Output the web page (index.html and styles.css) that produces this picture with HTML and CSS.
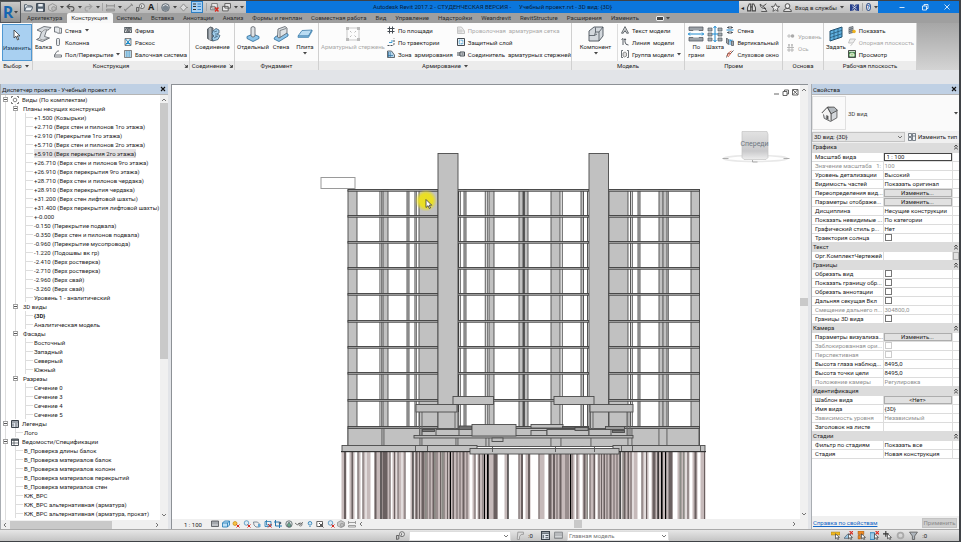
FILE: index.html
```html
<!DOCTYPE html>
<html lang="ru">
<head>
<meta charset="utf-8">
<title>Autodesk Revit 2017.2</title>
<link rel="stylesheet" href="styles.css">
</head>
<body>
<svg class="sprite" aria-hidden="true">
  <symbol id="caret" viewBox="0 0 4 4"><path d="M0 1h4L2 3.500z" fill="#444"/></symbol>
  <symbol id="chev" viewBox="0 0 6 6"><path d="M1 2l2 2 2-2" fill="none" stroke="#555" stroke-width=".8"/></symbol>
  <symbol id="dbl" viewBox="0 0 6 6"><path d="M1.300 2.800L3 1.200l1.700 1.600M1.300 5.200L3 3.600l1.700 1.600" fill="none" stroke="#222" stroke-width=".9"/></symbol>
  <symbol id="corner" viewBox="0 0 4 4"><path d="M.5.5l2 2M3.500 1v2.500H1z" fill="#333" stroke="#333" stroke-width=".6"/></symbol>
  <symbol id="close" viewBox="0 0 6 6"><path d="M1 1l4 4M5 1L1 5" fill="none" stroke="#111" stroke-width="1.100"/></symbol>
  <symbol id="open" viewBox="0 0 8 8"><path d="M.5 7V1.500h2l1 1h3v1M.5 7l1.500-3.500h6L6.200 7z" fill="#e8edf2" stroke="#4b5866" stroke-width=".8"/></symbol>
  <symbol id="save" viewBox="0 0 8 8"><path d="M.5.5h7v7h-7z" fill="#53616f" stroke="#34404c" stroke-width=".8"/><path d="M2 .8h4v2.400H2zM1.800 5h4.400v2.400H1.800z" fill="#e8edf2"/></symbol>
  <symbol id="box" viewBox="0 0 8 8"><path d="M.5 2.500L4 .6l3.500 1.900v3.400L4 7.600.5 5.900z" fill="#ccc" stroke="#888" stroke-width=".7"/><circle cx="5" cy="5" r="1.800" fill="#bbb" stroke="#888" stroke-width=".6"/></symbol>
  <symbol id="undo" viewBox="0 0 8 8"><path d="M3.500 1L1 3.200l2.500 2.200M1 3.200h4q2.300.2 2 2.300T4.500 7" fill="none" stroke="#555" stroke-width="1"/></symbol>
  <symbol id="redo" viewBox="0 0 8 8"><path d="M4.500 1L7 3.200 4.500 5.400M7 3.200H3Q.7 3.400 1 5.500T3.500 7" fill="none" stroke="#a3a3a3" stroke-width="1"/></symbol>
  <symbol id="measure" viewBox="0 0 8 8"><path d="M.5 1v3M7.500 1v3M.5 2.500h7M.5 5.500h7v1.500h-7z" fill="none" stroke="#888" stroke-width=".8"/></symbol>
  <symbol id="dim" viewBox="0 0 8 8"><path d="M1 6.500L7 1.500M0 5.500l2 2M6 .5l2 2" fill="none" stroke="#888" stroke-width=".9"/></symbol>
  <symbol id="tag" viewBox="0 0 8 8"><circle cx="5.300" cy="2.800" r="2.200" fill="#eee" stroke="#555" stroke-width=".7"/><path d="M.5 7.500V4h2v3zM5 2v2" fill="none" stroke="#555" stroke-width=".8"/></symbol>
  <symbol id="globe" viewBox="0 0 8 8"><circle cx="4" cy="4" r="3.400" fill="#dde1e5" stroke="#555f69" stroke-width=".8"/><path d="M1 3.500l3-1.700 3 1.700v2L4 7 1 5.500z" fill="#7a858f"/></symbol>
  <symbol id="diamond" viewBox="0 0 8 8"><path d="M4 .8L6.800 4 4 7.200 1.200 4zM6.500 4H8" fill="#ddd" stroke="#888" stroke-width=".8"/></symbol>
  <symbol id="thin" viewBox="0 0 8 8"><path d="M0 1h3M0 3.500h3M0 6.500h3" stroke="#333" stroke-width="1.200"/><path d="M4.500 1H8M4.500 3.500H8M4.500 6.500H8" stroke="#0962b5" stroke-width=".7"/></symbol>
  <symbol id="wins" viewBox="0 0 8 8"><path d="M2.500.5h5v4h-5zM.5 3h5v4h-5z" fill="#eee" stroke="#555" stroke-width=".8"/></symbol>
  <symbol id="winx" viewBox="0 0 8 8"><path d="M1.500.5h5v4h-5zM.5 3h4v3h-4z" fill="#eee" stroke="#666" stroke-width=".7"/><path d="M4.500 4l3 3.500M7.500 4l-3 3.500" stroke="#d92a20" stroke-width="1.200"/></symbol>
  <symbol id="arrow" viewBox="0 0 8 12"><path d="M1 1v8l2-1.800L4.500 11l1.300-.6-1.500-3.500H7z" fill="#fff" stroke="#333" stroke-width=".8"/></symbol>
  <symbol id="beam" viewBox="0 0 16 16"><path d="M1 4l7-3.500 7 1-2 2-2.500 1-2 6 5 1.500-7 3.500-6-2 3-1.500 2-6z" fill="#d6dade" stroke="#555c63" stroke-width=".8"/><path d="M6 6l2-2 3-.5M4 13l3 1 5-2" fill="none" stroke="#777" stroke-width=".6"/></symbol>
  <symbol id="wall" viewBox="0 0 8 8"><path d="M.5 1h4l1 1.200h2v5h-4L2.500 6h-2z" fill="#e7eaed" stroke="#555c63" stroke-width=".8"/><path d="M5.500 2.200v5" stroke="#888" stroke-width=".6"/></symbol>
  <symbol id="col" viewBox="0 0 8 8"><rect x="2.500" y=".5" width="3" height="7" rx="1" fill="#e7eaed" stroke="#555c63" stroke-width=".8"/></symbol>
  <symbol id="floor" viewBox="0 0 8 8"><path d="M.5 5l2-3q.5-1 1.500-1h1M.5 5h7v2h-7z" fill="#f5f5f5" stroke="#555c63" stroke-width=".8"/></symbol>
  <symbol id="truss" viewBox="0 0 8 8"><path d="M.3 1.500h7.400v5H.3zM.3 6.500l2-5 1.800 5 1.800-5 1.800 5M2.300 6.500l1.800-5 1.800 5" fill="none" stroke="#444b52" stroke-width=".8"/></symbol>
  <symbol id="brace" viewBox="0 0 8 8"><path d="M1 .5h6v7H1z" fill="#e7eaed" stroke="#555" stroke-width=".7"/><path d="M1.500 7L4 4 1.500 1M6.500 7L4 4l2.500-3M2 5.500h4" fill="none" stroke="#0b84c6" stroke-width=".9"/></symbol>
  <symbol id="bsys" viewBox="0 0 8 8"><path d="M.5.5h7v7h-7z" fill="#e7eaed" stroke="#555" stroke-width=".7"/><path d="M2.200 1v6M4 1v6M5.800 1v6" stroke="#2a93cf" stroke-width=".8"/></symbol>
  <symbol id="join" viewBox="0 0 16 16"><path d="M2.500 3l3-2L8 2v13l-3-1-2.500-1.500z" fill="#7e878f" stroke="#454c53" stroke-width=".8"/><path d="M5 2v12" stroke="#dfe3e6" stroke-width="1"/><path d="M8 5l3-2.500 3 1.500v3l-2 1 3 1.500-2 4-5 1.500-1-3 2-2-2-2z" fill="#9fcbe8" stroke="#3b5c75" stroke-width=".8"/><path d="M9 6l3-1M9 12l4-2M11 7v4" stroke="#3b5c75" stroke-width=".7"/></symbol>
  <symbol id="foot" viewBox="0 0 16 16"><path d="M2 10.500L8 8l6 2.500v2L8 15.500l-6-3z" fill="#8cc3e8" stroke="#2a6b9b" stroke-width=".8"/><path d="M6 1.500l2-1 2 1V10l-2 1.200L6 10z" fill="#dfe3e6" stroke="#555c63" stroke-width=".8"/></symbol>
  <symbol id="wfoot" viewBox="0 0 16 16"><path d="M2 11l9-5 4 2v2l-9 5.500L1 13z" fill="#8cc3e8" stroke="#2a6b9b" stroke-width=".8"/><path d="M5 3l7-2.500 2 1.500v5l-8 5-1.500-1z" fill="#dfe3e6" stroke="#555c63" stroke-width=".8"/><path d="M7 4.500l6-2M7 4.500v7" stroke="#555c63" stroke-width=".7"/></symbol>
  <symbol id="slab" viewBox="0 0 16 16"><path d="M1 10l4-5.500 10-.5-3.500 6z" fill="#b9dcf3" stroke="#3b7ba8" stroke-width=".8"/><path d="M1 10v1.500h10.500L15 5.500V4l-3.500 6z" fill="#7fb8dd" stroke="#3b7ba8" stroke-width=".6"/></symbol>
  <symbol id="rebar" viewBox="0 0 16 16"><path d="M2 2h12v12H2z" fill="none" stroke="#c9c9c9"/><path d="M1 1h3v3H1zM12 1h3v3h-3zM1 12h3v3H1zM12 12h3v3h-3z" fill="#bbb"/><path d="M5 5l1.500 1.500M11 11l-1.500-1.500M11 5L9.500 6.500M5 11l1.500-1.500" stroke="#bbb"/></symbol>
  <symbol id="area" viewBox="0 0 8 8"><path d="M2.500.5v7M5.500.5v7M.5 2.500h7M.5 5.500h7" stroke="#454c53" stroke-width="1"/></symbol>
  <symbol id="path" viewBox="0 0 8 8"><path d="M.5 7.500h5q1.500 0 1.500-2V.5" fill="none" stroke="#454c53" stroke-width="1" stroke-dasharray="2 1"/><path d="M2 4.500h3V2" fill="none" stroke="#2a93cf" stroke-width=".9"/></symbol>
  <symbol id="zone" viewBox="0 0 8 8"><path d="M.5 1l4 0 3 4v2.500h-7z" fill="#b9d8ec" stroke="#454c53" stroke-width=".8"/><path d="M1.500 2v5M3.200 2v5M1 5.500h5" stroke="#2a6b9b" stroke-width=".7"/></symbol>
  <symbol id="mesh" viewBox="0 0 8 8"><path d="M.5 1h4l3 4v2.500h-7z" fill="#eee" stroke="#b9b9b9" stroke-width=".8"/><path d="M2 2v5M4 3v4M1 5h6" stroke="#bbb" stroke-width=".6"/></symbol>
  <symbol id="cover" viewBox="0 0 8 8"><path d="M.5.5h7v7h-7z" fill="#f4f6f8" stroke="#454c53" stroke-width="1"/><path d="M2.200 2.200h3.600v3.600H2.200z" fill="none" stroke="#0b84c6" stroke-width=".8" stroke-dasharray="1 .6"/></symbol>
  <symbol id="coupler" viewBox="0 0 8 8"><path d="M3 2h4.500v4H3zM0 3h3M0 5h3M4.500 4h2" fill="#d8dce0" stroke="#454c53" stroke-width="1"/></symbol>
  <symbol id="cube" viewBox="0 0 16 16"><path d="M1 5l5-4h9v9l-4 5H1z" fill="#d3d8dd" stroke="#4b535b" stroke-width=".9"/><path d="M1 9.500h5.500l1-3.500H11l4-5M7.500 6V1.500M11 6v9M6.500 9.500L9 8" fill="none" stroke="#4b535b" stroke-width=".8"/></symbol>
  <symbol id="mtext" viewBox="0 0 8 8"><path d="M.5 7.200L4 .6l3.500 6.600H5.600L5 5.500H3l-.7 1.700zM3.500 4.200h1.200" fill="#e5e5e5" stroke="#454c53" stroke-width=".8"/></symbol>
  <symbol id="mline" viewBox="0 0 8 8"><path d="M.5 1.500l1.500-1V7M4 1v3q.3 3 3.500 3M3 2l1-1.300L5 2" fill="none" stroke="#454c53" stroke-width=".9"/></symbol>
  <symbol id="group" viewBox="0 0 8 8"><path d="M2 .5H.5v7H2M6 .5h1.500v7H6" fill="none" stroke="#454c53" stroke-width=".8"/><path d="M2 3l2-1 1.500 1v3L3.500 7 2 6z" fill="#ddd" stroke="#555" stroke-width=".6"/></symbol>
  <symbol id="face" viewBox="0 0 16 16"><path d="M1 1h14v3.500h-4.500v7H15V15H1v-3.500h4.500v-7H1z" fill="#9ba1a7" stroke="#555c63" stroke-width=".8"/><path d="M5 4.500h6v7H5z" fill="#fff"/><path d="M0 8h16M2 6.500L.5 8 2 9.500M14 6.500L15.500 8 14 9.500" fill="none" stroke="#1d8bd1" stroke-width="1"/></symbol>
  <symbol id="shaft" viewBox="0 0 16 16"><path d="M1 2h4v3H1zM1 7h4v3H1zM1 12h4v3H1zM11 2h4v3h-4zM11 7h4v3h-4zM11 12h4v3h-4z" fill="#a5abb0" stroke="#555c63" stroke-width=".7"/><path d="M8 0v16M6.500 2L8 .3 9.500 2M6.500 14L8 15.700 9.500 14M5 8h6" fill="none" stroke="#1d8bd1" stroke-width="1"/></symbol>
  <symbol id="wopen" viewBox="0 0 8 8"><path d="M1 1.500h2M5 1.500h2M1 6.500h2M5 6.500h2M3 0v3M5 0v3M3 5v3M5 5v3" stroke="#454c53" stroke-width=".9"/><path d="M.5 4h7" stroke="#1d8bd1"/></symbol>
  <symbol id="vopen" viewBox="0 0 8 8"><path d="M.5 0v5l2 1.500V1.500zM5.500 3v4.500h2V3z" fill="#a5abb0" stroke="#454c53" stroke-width=".7"/><path d="M4 1v6M3.500 3l3-1" stroke="#1d8bd1" stroke-width=".9"/></symbol>
  <symbol id="dormer" viewBox="0 0 8 8"><path d="M.5 7.500L2 3l2 1 3.500-3.500" fill="none" stroke="#555" stroke-width=".9"/><path d="M1 6l2.500-4 2-1M2 7l3-4" fill="none" stroke="#d2472f" stroke-width=".8"/></symbol>
  <symbol id="level" viewBox="0 0 8 8"><path d="M0 4h4M2 2v4" stroke="#aaa" stroke-width=".7"/><circle cx="5.500" cy="4" r="1.800" fill="#aaa"/></symbol>
  <symbol id="grid" viewBox="0 0 8 8"><path d="M2 2v6M5 2v6M0 3.500h7M0 6h7" stroke="#aaa" stroke-width=".8"/><circle cx="2" cy="1" r=".9" fill="#aaa"/><circle cx="5" cy="1" r=".9" fill="#aaa"/></symbol>
  <symbol id="plane" viewBox="0 0 16 16"><path d="M2 5l12-4v10L2 15z" fill="#5fb0e0" stroke="#21506f" stroke-width="1"/><path d="M6 3.700v10M10 2.300v10M2 8.300l12-4M2 11.700l12-4" stroke="#21506f" stroke-width=".7"/></symbol>
  <symbol id="show" viewBox="0 0 8 8"><path d="M1 1.500l4-1v6l-4 1zM1 3.500l4-1M1 5.500l4-1M3 1v6" fill="#cfd6dc" stroke="#454c53" stroke-width=".7"/><circle cx="6" cy="5.500" r="1.800" fill="#f0b31e"/></symbol>
  <symbol id="rplane" viewBox="0 0 8 8"><path d="M2 1h5.500L5 5H.5zM2.500 7.500l2-1.500" fill="#eee" stroke="#b5b5b5" stroke-width=".8"/></symbol>
  <symbol id="keyi" viewBox="0 0 8 8"><path d="M2.500 1h5v2h-2L4 5v2.500H2z" fill="#ddd" stroke="#999" stroke-width=".8"/></symbol>
  <symbol id="view" viewBox="0 0 8 8"><path d="M.5.5h7v7h-7z" fill="#4d8b52" stroke="#333" stroke-width=".8"/><path d="M1 1.500h6M2 4l2-1 2 1v2H2z" stroke="#fff" stroke-width=".7" fill="#a9cf8d"/></symbol>
  <symbol id="binoc" viewBox="0 0 8 8"><path d="M.5 7V4L2 .8h1.300V7zM7.500 7V4L6 .8H4.700V7z" fill="#ddd" stroke="#444" stroke-width=".9"/><path d="M3 3.500h2" stroke="#444"/></symbol>
  <symbol id="sat" viewBox="0 0 8 8"><path d="M1 1q0 4 5 4L3.500 3zM3.500 3L6.500.7M2 7.500h5L5 4.500" fill="#ddd" stroke="#444" stroke-width=".8"/></symbol>
  <symbol id="star" viewBox="0 0 8 8"><path d="M4 .5l1 2.400 2.600.2-2 1.700.7 2.600L4 6 1.700 7.400l.7-2.600-2-1.700L3 2.900z" fill="#eee" stroke="#444" stroke-width=".7"/></symbol>
  <symbol id="user" viewBox="0 0 8 8"><circle cx="4" cy="2.700" r="2.100" fill="#eee" stroke="#444" stroke-width=".8"/><path d="M.5 7.500q0-2 2.300-2.500h2.400q2.300.5 2.300 2.500z" fill="#eee" stroke="#444" stroke-width=".8"/></symbol>
  <symbol id="exch" viewBox="0 0 8 8"><path d="M0 1l3 .3L4 3l1-1.700L8 1v6l-3-.3L4 5 3 6.700 0 7z" fill="#27408b"/><path d="M2 2.500l4 3M6 2.500l-4 3" stroke="#e6ebf5" stroke-width=".7"/></symbol>
  <symbol id="house" viewBox="0 0 16 16"><path d="M2 7l5-5 8 3v7l-6 3.500-6-3z" fill="#d5d9dd" stroke="#555" stroke-width=".8"/><path d="M.8 7.500L6 2l3.500 6.300V15" fill="#f3f3f3" stroke="#444" stroke-width=".9"/><path d="M9.500 8.300L15.500 5l-3-3L6 2z" fill="#b4babf" stroke="#444" stroke-width=".8"/><path d="M5 13V9.500l2 .8v3.500z" fill="#555"/></symbol>
  <symbol id="types" viewBox="0 0 8 8"><path d="M.5.5h3v3h-3zM.5 4.500h3v3h-3zM4.500.5h3v7h-3zM4.500 3h3" fill="#eef2f6" stroke="#48525c" stroke-width=".7"/></symbol>
  <symbol id="brk" viewBox="0 0 8 8"><path d="M2 .5H.5V2M6 .5h1.500V2M2 7.500H.5V6M6 7.500h1.500V6" fill="none" stroke="#555" stroke-width=".8"/><circle cx="4" cy="4" r="1.800" fill="none" stroke="#555" stroke-width=".7"/></symbol>
  <symbol id="legend" viewBox="0 0 8 8"><path d="M.5.5h7v7h-7z" fill="#dfe5ec" stroke="#3b434b"/><path d="M1 2h6M2 3.500v3M4 4h2.500M4 6h2.500" stroke="#3b434b" stroke-width=".8"/></symbol>
  <symbol id="sched" viewBox="0 0 8 8"><path d="M.5 1h7v6.500h-7z" fill="#fff" stroke="#3b434b" stroke-width=".9"/><path d="M.5 2h7" stroke="#3b434b" stroke-width="1.500"/><path d="M.5 5h7M3 2v5.500" stroke="#3b434b" stroke-width=".7"/></symbol>
  <symbol id="v1" viewBox="0 0 8 8"><path d="M.5 1h7v5.500h-7z" fill="#a5a9ae" stroke="#4b4f54" stroke-width=".8"/><path d="M1 5h6" stroke="#d8dbde"/></symbol>
  <symbol id="v2" viewBox="0 0 8 8"><path d="M.5 3l2-2h5v4l-2 2h-5zM.5 3h5v4M5.500 3l2-2" fill="#bfe0f5" stroke="#1d77b3" stroke-width=".8"/></symbol>
  <symbol id="v3" viewBox="0 0 8 8"><circle cx="3" cy="3.500" r="2" fill="#f6c243" stroke="#c78a12" stroke-width=".7"/><path d="M4.500 4.500L7.500 7.500M7.500 4.500l-3 3" stroke="#d92a20"/></symbol>
  <symbol id="v4" viewBox="0 0 8 8"><circle cx="3.500" cy="3" r="2.300" fill="#d8ecf8" stroke="#3c83b3" stroke-width=".7"/><path d="M4.500 4.500L7.500 7.500M7.500 4.500l-3 3" stroke="#d92a20"/></symbol>
  <symbol id="v5" viewBox="0 0 8 8"><path d="M.5 2h4l2 2v3H3L1 5z" fill="#eee" stroke="#567" stroke-width=".7"/><path d="M5 4h2.500v3H5z" fill="#62a8d5"/></symbol>
  <symbol id="v6" viewBox="0 0 8 8"><path d="M1 1.500h6v5H1zM2.500 0v5H8" fill="#d8ecf8" stroke="#2577ad" stroke-width=".8"/><path d="M4 4l3.500 3.500M7.500 4L4 7.500" stroke="#d92a20"/></symbol>
  <symbol id="v7" viewBox="0 0 8 8"><path d="M1.500 0v6H8M0 2h5.500v6" fill="none" stroke="#2577ad"/><circle cx="6" cy="3" r="1.300" fill="#567"/></symbol>
  <symbol id="v8" viewBox="0 0 8 8"><circle cx="4" cy="4" r="3.200" fill="#dfe3e6" stroke="#566" stroke-width=".8"/><path d="M2 5l2-3 2 3v2H3z" fill="#69a58a" stroke="#445" stroke-width=".5"/></symbol>
  <symbol id="v9" viewBox="0 0 8 8"><path d="M0 3l2.500 2L4 3l2 1.500L8 2" fill="none" stroke="#555" stroke-width=".8"/><circle cx="5.500" cy="4.500" r="1.500" fill="none" stroke="#555" stroke-width=".7"/></symbol>
  <symbol id="v10" viewBox="0 0 8 8"><circle cx="4" cy="3.300" r="1.800" fill="#cfe8f9" stroke="#2577ad" stroke-width=".8"/><path d="M3.500 6h1v1h-1z" fill="#2577ad"/></symbol>
  <symbol id="v11" viewBox="0 0 8 8"><path d="M.8 1.500h5.700v5H.8z" fill="#fff" stroke="#444" stroke-width=".8"/><path d="M3 3l4.500 4.500M7 3L3 7" stroke="#444" stroke-width=".9"/></symbol>
  <symbol id="pick" viewBox="0 0 8 8"><path d="M4 2.500v4.500l1.200-1L6 7.700l.8-.4L6 5.700h1.500z" fill="#fff" stroke="#333" stroke-width=".6"/></symbol>
</svg>

<div class="app">
  <header class="top">
    <button class="appbtn" aria-label="Меню приложения"><span>R</span><svg class="car"><use href="#caret"/></svg></button>
    <div class="bars">
      <div class="title">
        <div class="qat">
          <svg class="i8"><use href="#open"/></svg><svg class="i8"><use href="#save"/></svg><svg class="i8"><use href="#box"/></svg><svg class="car"><use href="#caret"/></svg>
          <svg class="i8"><use href="#undo"/></svg><svg class="car"><use href="#caret"/></svg>
          <svg class="i8"><use href="#redo"/></svg><svg class="car"><use href="#caret"/></svg><i class="sep"></i>
          <svg class="i8"><use href="#measure"/></svg><svg class="car"><use href="#caret"/></svg>
          <svg class="i8"><use href="#dim"/></svg><svg class="i8"><use href="#tag"/></svg><b class="bigA">A</b><i class="sep"></i>
          <svg class="i8"><use href="#globe"/></svg><svg class="car"><use href="#caret"/></svg>
          <svg class="i8"><use href="#diamond"/></svg><span class="on"><svg class="i8"><use href="#thin"/></svg></span>
          <i class="sep"></i><svg class="i8"><use href="#winx"/></svg><svg class="i8"><use href="#wins"/></svg><svg class="car"><use href="#caret"/></svg><svg class="car"><use href="#caret"/></svg>
        </div>
        <h1><span>Autodesk Revit 2017.2 - СТУДЕНЧЕСКАЯ ВЕРСИЯ -</span><span>Учебный проект.rvt - 3D вид: {3D}</span></h1>
        <div class="info">
          <span class="tri">◂</span><svg class="i8"><use href="#binoc"/></svg><svg class="i8"><use href="#sat"/></svg><svg class="i8"><use href="#star"/></svg><svg class="i8"><use href="#user"/></svg>
          <span>Вход в службы</span><svg class="car"><use href="#caret"/></svg><svg class="i8 ex"><use href="#exch"/></svg><i class="sep"></i><b class="help">?</b><svg class="car"><use href="#caret"/></svg>
        </div>
        <div class="wctl">
          <svg viewBox="0 0 8 8"><path d="M1.500 4.500h5"/></svg>
          <svg viewBox="0 0 8 8"><path d="M1.500 3h4v4h-4zM3 3V1.500h4v4H5.500"/></svg>
          <svg viewBox="0 0 8 8"><path d="M1.500 1.500l5 5M6.500 1.500l-5 5"/></svg>
        </div>
      </div>
      <nav class="tabs">
        <a href="#">Архитектура</a><a href="#" class="cur">Конструкция</a><a href="#">Системы</a><a href="#">Вставка</a><a href="#">Аннотации</a><a href="#">Анализ</a><a href="#">Формы и генплан</a><a href="#">Совместная работа</a><a href="#">Вид</a><a href="#">Управление</a><a href="#">Надстройки</a><a href="#">Weandrevit</a><a href="#">RevitStructure</a><a href="#">Расширения</a><a href="#">Изменить</a><span class="pill"></span><svg class="car"><use href="#caret"/></svg>
      </nav>
    </div>
  </header>

  <div class="ribbon">
    <section class="panel"><div class="tools"><button class="big picked"><svg><use href="#arrow"/></svg>Изменить</button></div><h2>Выбор <svg class="car"><use href="#caret"/></svg></h2></section>
    <section class="panel"><div class="tools">
      <button class="big beam"><svg><use href="#beam"/></svg>Балка</button>
      <div class="stack framing"><button><svg><use href="#wall"/></svg>Стена<svg class="car"><use href="#caret"/></svg></button><button><svg><use href="#col"/></svg>Колонна</button><button><svg><use href="#floor"/></svg>Пол/Перекрытие<svg class="car"><use href="#caret"/></svg></button></div>
      <div class="stack"><button><svg><use href="#truss"/></svg>Ферма</button><button><svg><use href="#brace"/></svg>Раскос</button><button><svg><use href="#bsys"/></svg>Балочная система</button></div>
    </div><h2>Конструкция<svg class="corner"><use href="#corner"/></svg></h2></section>
    <section class="panel"><div class="tools mid"><button class="big"><svg><use href="#join"/></svg>Соединение</button></div><h2 class="snug">Соединение<svg class="corner"><use href="#corner"/></svg></h2></section>
    <section class="panel"><div class="tools mid"><button class="big"><svg><use href="#foot"/></svg>Отдельный</button><button class="big narrow"><svg><use href="#wfoot"/></svg>Стена</button><button class="big narrow"><svg><use href="#slab"/></svg>Плита<svg class="car"><use href="#caret"/></svg></button></div><h2>Фундамент</h2></section>
    <section class="panel"><div class="tools">
      <button class="big wide off"><svg><use href="#rebar"/></svg>Арматурный стержень</button>
      <div class="stack zones"><button><svg><use href="#area"/></svg>По площади</button><button><svg><use href="#path"/></svg>По траектории</button><button><svg><use href="#zone"/></svg>Зона&nbsp; армирования</button></div>
      <div class="stack"><button class="off"><svg><use href="#mesh"/></svg>Проволочная&nbsp; арматурная сетка</button><button><svg><use href="#cover"/></svg>Защитный слой</button><button><svg><use href="#coupler"/></svg>Соединитель&nbsp; арматурных стержней</button></div>
    </div><h2>Армирование <svg class="car"><use href="#caret"/></svg></h2></section>
    <section class="panel"><div class="tools">
      <button class="big comp"><svg><use href="#cube"/></svg>Компонент<svg class="car"><use href="#caret"/></svg></button>
      <div class="stack ruled"><button><svg><use href="#mtext"/></svg>Текст модели</button><button><svg><use href="#mline"/></svg>Линия&nbsp; модели</button><button><svg><use href="#group"/></svg>Группа модели<svg class="car"><use href="#caret"/></svg></button></div>
    </div><h2>Модель</h2></section>
    <section class="panel"><div class="tools">
      <button class="big slim"><svg><use href="#face"/></svg>По<br>грани</button><button class="big slim"><svg><use href="#shaft"/></svg>Шахта</button>
      <div class="stack"><button><svg><use href="#wopen"/></svg>Стена</button><button><svg><use href="#vopen"/></svg>Вертикальный</button><button><svg><use href="#dormer"/></svg>Слуховое окно</button></div>
    </div><h2>Проем</h2></section>
    <section class="panel"><div class="tools"><div class="stack two"><button class="off"><svg><use href="#level"/></svg>Уровень</button><button class="off"><svg><use href="#grid"/></svg>Ось</button></div></div><h2>Основа</h2></section>
    <section class="panel"><div class="tools"><button class="big slim"><svg><use href="#plane"/></svg>Задать</button>
      <div class="stack"><button><svg><use href="#show"/></svg>Показать</button><button class="off"><svg><use href="#rplane"/></svg>Опорная плоскость</button><button><svg><use href="#view"/></svg>Просмотр</button></div>
    </div><h2>Рабочая плоскость</h2></section>
    <div class="rest"></div>
  </div>

  <main class="work">
    <aside class="dock browser">
      <h3>Диспетчер проекта - Учебный проект.rvt<svg class="x"><use href="#close"/></svg></h3>
      <div class="scroller">
        <ul class="tree">
          <li><div class="row"><i class="tg"></i><svg><use href="#brk"/></svg>Виды (По комплектам)</div>
            <ul>
              <li><div class="row"><i class="tg"></i>Планы несущих конструкций</div>
                <ul class="leaf"><li>+1.500 (Козырьки)</li><li>+2.710 (Верх стен и пилонов 1го этажа)</li><li>+2.910 (Перекрытие 1го этажа)</li><li>+5.710 (Верх стен и пилонов 2го этажа)</li><li><span class="sel">+5.910 (Верх перекрытия 2го этажа)</span></li><li>+26.710 (Верх стен и пилонов 9го этажа)</li><li>+26.910 (Верх перекрытия 9го этажа)</li><li>+28.710 (Верх стен и пилонов чердака)</li><li>+28.910 (Верх перекрытия чердака)</li><li>+31.200 (Верх стен лифтовой шахты)</li><li>+31.400 (Верх перекрытия лифтовой шахты)</li><li>+-0.000</li><li>-0.150 (Перекрытие подвала)</li><li>-0.350 (Верх стен и пилонов подвала)</li><li>-0.960 (Перекрытие мусопровода)</li><li>-1.220 (Подошвы вк гр)</li><li>-2.410 (Верх ростверка)</li><li>-2.710 (Верх ростверка)</li><li>-2.960 (Верх свай)</li><li>-3.260 (Верх свай)</li><li>Уровень 1 - аналитический</li></ul></li>
              <li><div class="row"><i class="tg"></i>3D виды</div><ul class="leaf"><li><b>{3D}</b></li><li>Аналитическая модель</li></ul></li>
              <li><div class="row"><i class="tg"></i>Фасады</div><ul class="leaf"><li>Восточный</li><li>Западный</li><li>Северный</li><li>Южный</li></ul></li>
              <li><div class="row"><i class="tg"></i>Разрезы</div><ul class="leaf"><li>Сечение 0</li><li>Сечение 3</li><li>Сечение 4</li><li>Сечение 5</li></ul></li>
            </ul></li>
          <li><div class="row"><i class="tg"></i><svg><use href="#legend"/></svg>Легенды</div><ul class="leaf"><li>Лого</li></ul></li>
          <li><div class="row"><i class="tg"></i><svg><use href="#sched"/></svg>Ведомости/Спецификации</div><ul class="leaf"><li>В_Проверка длины балок</li><li>В_Проверка материалов балок</li><li>В_Проверка материалов колонн</li><li>В_Проверка материалов перекрытий</li><li>В_Проверка материалов стен</li><li>КЖ_ВРС</li><li>КЖ_ВРС альтернативная (арматура)</li><li>КЖ_ВРС альтернативная (арматура, прокат)</li></ul></li>
        </ul>
        <div class="vbar"><svg class="up"><use href="#chev"/></svg><i class="thumb long"></i><svg><use href="#chev"/></svg></div>
      </div>
      <div class="hbar"><svg class="lf"><use href="#chev"/></svg><i class="thumb"></i><svg class="rt"><use href="#chev"/></svg></div>
    </aside>

    <section class="canvas">
      <div class="scene">
        <svg id="model" viewBox="172 85 627 434" preserveAspectRatio="xMidYMax meet" role="img" aria-label="3D вид">
          <defs>
            <linearGradient id="cubeFill" x2="0" y2="1"><stop offset="0" stop-color="#e2e2e2"/><stop offset=".7" stop-color="#c9c9cb"/><stop offset="1" stop-color="#eee"/></linearGradient>
            <radialGradient id="glow"><stop offset=".6" stop-color="#ece01c" stop-opacity=".95"/><stop offset="1" stop-color="#f0e010" stop-opacity="0"/></radialGradient>
          </defs>
          <g id="piles"></g>
          <g id="frame"></g>
          <rect x="320.500" y="177.500" width="34" height="11" fill="#fff" stroke="#9a9a9a"/>
          <circle cx="425.500" cy="200.500" r="11" fill="url(#glow)"/>
          <path d="M425.500 199.500v8l2-1.800 1.300 2.800 1.200-.5-1.300-2.800h2.500z" fill="#fff" stroke="#333" stroke-width=".8"/>
          <ellipse cx="755" cy="158.500" rx="32" ry="3" fill="none" stroke="#e8e8e8" stroke-width="1.500"/>
          <path d="M722 158.500h6M783 158.500h6M752 160v2h5" stroke="#999" fill="none" stroke-width=".8"/>
          <path d="M741.500 131.500h25l1 3v23l-2 2h-22l-2-2z" fill="url(#cubeFill)" stroke="#c3c3c3" stroke-width=".7"/>
          <text x="754" y="146" text-anchor="middle" class="face">Спереди</text>
          <g fill="none" stroke="#555" stroke-width=".9"><path d="M773.500 94h5M782.500 91.500h4v4h-4zM784 91.500v-1.500h4v4h-1.500M792.500 90l4.500 4.500M797 90l-4.500 4.500M792 89.500h5.500v5.500H792z"/></g>
        </svg>
        <div class="vbar"><svg class="up"><use href="#chev"/></svg><i class="thumb"></i><svg><use href="#chev"/></svg></div>
      </div>
      <div class="viewbar">
        <span class="scale">1 : 100</span>
        <div class="vicons"><svg><use href="#v1"/></svg><svg><use href="#v2"/></svg><svg><use href="#v3"/></svg><svg><use href="#v4"/></svg><svg><use href="#v5"/></svg><svg><use href="#v6"/></svg><svg><use href="#v7"/></svg><svg><use href="#v8"/></svg><svg><use href="#v9"/></svg><svg><use href="#v10"/></svg><svg><use href="#v11"/></svg><svg><use href="#v4"/></svg><svg><use href="#box"/></svg><svg><use href="#measure"/></svg><svg class="lf"><use href="#chev"/></svg></div>
        <i class="thumb"></i><svg class="rt"><use href="#chev"/></svg>
      </div>
    </section>

    <aside class="dock props">
      <h3>Свойства<svg class="x"><use href="#close"/></svg></h3>
      <div class="type"><div class="pic"><svg><use href="#house"/></svg></div><span>3D вид</span><svg class="car"><use href="#caret"/></svg></div>
      <div class="inst"><div class="pick"><select aria-label="Экземпляр"><option>3D вид: {3D}</option></select><svg class="cv"><use href="#chev"/></svg></div><button class="etype"><svg><use href="#types"/></svg>Изменить тип</button></div>
      <div class="plist">
      <table>
        <colgroup><col class="c1"><col><col class="c3"></colgroup>
        <tr class="g"><th colspan="2">Графика</th><td><svg><use href="#dbl"/></svg></td></tr>
        <tr><th><label for="sc">Масштаб вида</label></th><td class="fld"><input id="sc" type="text" value="1 : 100"></td><td></td></tr>
        <tr class="dim"><th>Значение масштаба&nbsp; &nbsp;1:</th><td>100</td><td></td></tr>
        <tr><th>Уровень детализации</th><td>Высокий</td><td></td></tr>
        <tr><th>Видимость частей</th><td>Показать оригинал</td><td></td></tr>
        <tr><th>Переопределения вид...</th><td class="fld"><button>Изменить...</button></td><td></td></tr>
        <tr><th>Параметры отображе...</th><td class="fld"><button>Изменить...</button></td><td></td></tr>
        <tr><th>Дисциплина</th><td>Несущие конструкции</td><td></td></tr>
        <tr><th>Показать невидимые ...</th><td>По категории</td><td></td></tr>
        <tr><th>Графический стиль р...</th><td>Нет</td><td></td></tr>
        <tr><th><label for="k1">Траектория солнца</label></th><td><input id="k1" type="checkbox"></td><td></td></tr>
        <tr class="g"><th colspan="2">Текст</th><td><svg><use href="#dbl"/></svg></td></tr>
        <tr><th>Орг.КомплектЧертежей</th><td></td><td class="fld"><button aria-label="Выбрать"></button></td></tr>
        <tr class="g"><th colspan="2">Границы</th><td><svg><use href="#dbl"/></svg></td></tr>
        <tr><th><label for="k2">Обрезать вид</label></th><td><input id="k2" type="checkbox"></td><td></td></tr>
        <tr><th><label for="k3">Показать границу обр...</label></th><td><input id="k3" type="checkbox"></td><td></td></tr>
        <tr><th><label for="k4">Обрезать аннотации</label></th><td><input id="k4" type="checkbox"></td><td></td></tr>
        <tr><th><label for="k5">Дальняя секущая Вкл</label></th><td><input id="k5" type="checkbox"></td><td></td></tr>
        <tr class="dim"><th>Смещение дальнего п...</th><td>304800,0</td><td></td></tr>
        <tr><th><label for="k6">Границы 3D вида</label></th><td><input id="k6" type="checkbox"></td><td></td></tr>
        <tr class="g"><th colspan="2">Камера</th><td><svg><use href="#dbl"/></svg></td></tr>
        <tr><th>Параметры визуализа...</th><td class="fld"><button>Изменить...</button></td><td></td></tr>
        <tr class="dim"><th><label for="k7">Заблокированная ори...</label></th><td><input id="k7" type="checkbox" disabled></td><td></td></tr>
        <tr class="dim"><th><label for="k8">Перспективная</label></th><td><input id="k8" type="checkbox" disabled></td><td></td></tr>
        <tr><th>Высота глаза наблюд...</th><td>8495,0</td><td></td></tr>
        <tr><th>Высота точки цели</th><td>8495,0</td><td></td></tr>
        <tr class="dim"><th>Положение камеры</th><td>Регулировка</td><td></td></tr>
        <tr class="g"><th colspan="2">Идентификация</th><td><svg><use href="#dbl"/></svg></td></tr>
        <tr><th>Шаблон вида</th><td class="fld"><button>&lt;Нет&gt;</button></td><td></td></tr>
        <tr><th>Имя вида</th><td>{3D}</td><td></td></tr>
        <tr class="dim"><th>Зависимость уровня</th><td>Независимый</td><td></td></tr>
        <tr><th>Заголовок на листе</th><td></td><td></td></tr>
        <tr class="g"><th colspan="2">Стадии</th><td><svg><use href="#dbl"/></svg></td></tr>
        <tr><th>Фильтр по стадиям</th><td>Показать все</td><td></td></tr>
        <tr><th>Стадия</th><td>Новая конструкция</td><td></td></tr>
      </table>
      </div>
      <div class="foot"><a href="#">Справка по свойствам</a><button disabled>Применить</button></div>
    </aside>
  </main>

  <footer class="status">
    <svg class="i8"><use href="#tag"/></svg>
    <div class="pick"><select aria-label="Рабочий набор"><option></option></select><svg class="cv"><use href="#chev"/></svg></div>
    <svg class="i8"><use href="#keyi"/></svg><span class="zero">:0</span>
    <svg class="i8"><use href="#legend"/></svg><svg class="i8 gr"><use href="#v1"/></svg>
    <div class="pick"><select aria-label="Вариант"><option>Главная модель</option></select><svg class="cv"><use href="#chev"/></svg></div>
    <div class="sels">
      <svg viewBox="0 0 8 8"><path d="M0 1h8v2.500H0z" fill="#f3b91c" stroke="#a8790a" stroke-width=".5"/><use href="#pick"/></svg>
      <svg viewBox="0 0 8 8"><path d="M0 6.500L3 3h3L4 6.500z" fill="#9ccbe8" stroke="#456" stroke-width=".6"/><path d="M5 0l3 3M8 0L5 3" stroke="#d92a20"/><use href="#pick"/></svg>
      <svg viewBox="0 0 8 8"><path d="M1 0h5v3H1zM1 4h2v3H1z" fill="#f08a24" stroke="#9a5207" stroke-width=".5"/><use href="#pick"/></svg>
      <svg viewBox="0 0 8 8"><path d="M0 1.500h4v6H0z" fill="#9ccbe8" stroke="#1d77b3" stroke-width=".7"/><path d="M5 0l3 3M8 0L5 3" stroke="#d92a20"/><use href="#pick"/></svg>
      <svg viewBox="0 0 8 8"><path d="M2.500 0v5M0 2.500h5" stroke="#333"/><use href="#pick"/></svg>
      <svg viewBox="0 0 8 8"><circle cx="4" cy="4" r="2.600" fill="none" stroke="#aaa" stroke-width="1.600"/></svg>
      <svg viewBox="0 0 8 8"><path d="M.5 1h7L5 4.500v3H3v-3z" fill="#aeb5bc" stroke="#555" stroke-width=".7"/></svg>
      <span>:0</span>
    </div>
  </footer>
</div>
<script src="model.js"></script>
</body>
</html>
```
FILE: styles.css
```css
* { box-sizing: border-box; }
html, body { height: 100%; margin: 0; }
body { font: 6px/9px Roboto, "Noto Sans", sans-serif; color: #1e1e1e; background: #e2e4e8; overflow: hidden; }
button, input, select { font: inherit; color: inherit; margin: 0; padding: 0; border: 0; background: none; border-radius: 0; }
h1, h2, h3, ul { margin: 0; padding: 0; font: inherit; list-style: none; }
a { color: inherit; text-decoration: none; }
svg { flex: none; display: block; }
.sprite { position: absolute; width: 0; height: 0; }
.i8 { width: 9px; height: 9px; }
.car { width: 4px; height: 4px; }

.app { height: 100vh; display: flex; flex-direction: column; border: solid #3f4246; border-width: 1px 2px 1px 0; }

/* title bar and tabs */
.top { display: flex; background: #9f9f9f; }
.appbtn { width: 21px; height: 22px; display: flex; align-items: center; justify-content: center; gap: 1px; background: linear-gradient(#c9c9c9, #8f8f8f); border: 1px solid #55585c; }
.appbtn span { font: bold 16px/18px "Open Sans", sans-serif; color: #1565b0; }
.bars { flex: 1; min-width: 0; }
.title { display: flex; height: 12px; background: #0b76dc; }
.qat { width: 225px; display: flex; align-items: center; gap: 3px; padding-left: 3px; background: linear-gradient(#d3d3d3, #b9b9b9); overflow: hidden; }
.qat .car { margin-right: -1px; }
.bigA { font: bold 9px/10px "Open Sans", sans-serif; }
.on { height: 12px; padding: 1px; background: #a7d0f3; border: 1px solid #2d7fc4; display: flex; align-items: center; }
.on .i8 { width: 8px; height: 8px; }
.sep { width: 1px; height: 8px; background: #a6a6a6; }
h1 { flex: 1; display: flex; justify-content: center; gap: 8px; line-height: 12px; white-space: pre; color: #061d3a; }
.info { width: 139px; display: flex; align-items: center; gap: 3px; padding-left: 2px; background: linear-gradient(#e0e0e0, #bebebe); white-space: nowrap; }
.tri { width: 4px; }
.ex { margin-left: 3px; }
.help { width: 8px; height: 8px; border: 1px solid #3d5c93; border-radius: 50%; color: #274f96; background: #eef3fb; line-height: 6px; text-align: center; }
.wctl { width: 81px; display: flex; align-items: center; justify-content: space-between; padding: 0 8px 0 20px; }
.wctl svg { width: 8px; height: 8px; fill: none; stroke: #fff; stroke-width: .8; }
.tabs { display: flex; height: 10px; align-items: center; padding-left: 2px; white-space: nowrap; line-height: 10px; }
.tabs a { padding: 0 5px 0 4px; color: #2b2b2b; }
.tabs .cur { background: #f8f8f8; border-radius: 2px 2px 0 0; }
.pill { width: 8px; height: 5px; margin: 0 2px 0 12px; border: 1px solid #eee; border-radius: 1px; background: #444; }

/* ribbon */
.ribbon { display: grid; grid-template-columns: 33px 157px 45px 84px 253px 113px 98px 41px 93px 1fr; height: 47px; margin-bottom: 14px; background: #fcfcfc; }
.panel { display: flex; flex-direction: column; min-width: 0; border-right: 1px solid #d0d0d0; white-space: nowrap; }
.tools { flex: 1; display: flex; padding: 1px 1px 0 2px; }
.mid { justify-content: center; }
.panel h2 { display: flex; align-items: center; justify-content: center; gap: 3px; height: 9px; background: #ececec; position: relative; }
.panel .snug { padding-right: 6px; }
.corner { position: absolute; right: 1px; width: 4px; height: 4px; }
.big { display: flex; flex-direction: column; align-items: center; height: 37px; padding-top: 2px; line-height: 8px; }
.big > svg:first-child { width: 16px; height: 16px; margin-bottom: 1px; }
.picked { width: 30px; background: #a9d0f1; border: 1px solid #4f97d1; color: #26435c; }
.picked > svg:first-child { height: 12px; margin: 2px 0 3px; }
.big.narrow { width: 24px; }
.big.slim { width: 21px; }
.big.wide { width: 66px; }
.big.comp { width: 48px; }
.beam { width: 20px; }
.stack { padding: 0 2px; }
.stack button { display: flex; align-items: center; gap: 3px; height: 12px; }
.stack svg:first-child { width: 8px; height: 8px; }
.framing, .zones { width: 70px; }
.ruled { border-left: 1px solid #ddd; padding-left: 3px; }
.two { padding-top: 6px; }
.off { color: #a9a9a9; }
.rest { background: linear-gradient(#a6a6a6, #d4d4d4); }

/* work area */
.work { flex: 1; min-height: 0; display: grid; grid-template-columns: 168px minmax(0, 1fr) 148px; gap: 3px; }
.dock { display: flex; flex-direction: column; min-height: 0; background: #fff; border: 1px solid #a9adb2; border-width: 0 0 0 1px; }
.dock h3 { display: flex; align-items: center; justify-content: space-between; height: 10px; padding: 0 2px 0 1px; background: #bfd0e4; flex: none; }
.x { width: 6px; height: 6px; }
.scroller { flex: 1; min-height: 0; display: flex; justify-content: space-between; border-top: 1px solid #b5b5b5; overflow: hidden; }
.tree { min-width: 0; margin: 0 0 0 4px; border-left: 1px solid #ddd; white-space: nowrap; }
.tree ul { margin-left: 9px; border-left: 1px solid #ddd; }
.row { display: flex; align-items: center; height: 9px; }
.row svg { width: 8px; height: 8px; margin: 0 3px 0 -2px; }
.tg { width: 5px; height: 5px; margin: 0 5px 0 -3px; border: 1px solid #a3a3a3; background: linear-gradient(#555, #555) center / 3px 1px no-repeat #fff; }
.leaf li { display: flex; align-items: center; height: 9px; }
.leaf li::before { content: ""; width: 7px; height: 1px; margin-right: 1px; background: #ddd; }
.sel { background: #e3e1e3; }
.vbar { width: 8px; display: flex; flex-direction: column; align-items: center; justify-content: space-between; background: #f0f0f0; padding: 2px 0; flex: none; }
.vbar svg, .hbar svg { width: 6px; height: 6px; }
.up { transform: rotate(180deg); }
.lf { transform: rotate(90deg); }
.rt { transform: rotate(-90deg); }
.thumb { background: #c9c9c9; width: 8px; height: 8px; flex: none; }
.long { height: 256px; margin: 0 0 auto; }
.hbar { display: flex; align-items: center; height: 9px; padding: 0 8px 0 1px; background: #f0f0f0; flex: none; }
.hbar .thumb { width: 102px; margin: 0 auto 0 2px; }

.canvas { display: flex; flex-direction: column; min-width: 0; min-height: 0; background: #fff; border-left: 1px solid #8d9196; border-top: 1px solid #8d9196; }
.scene { flex: 1; min-height: 0; display: flex; }
#model { flex: 1; min-width: 0; height: 100%; }
.face { font: 7px Roboto, sans-serif; fill: #6d7780; }
.viewbar { display: flex; align-items: center; height: 10px; padding: 0 11px 0 12px; background: #f0f0f0; }
.viewbar svg { width: 8px; height: 8px; }
.viewbar svg.lf, .viewbar svg.rt { width: 6px; height: 6px; }
.scale { width: 27px; }
.vicons { display: flex; align-items: center; justify-content: space-between; width: 153px; }
.viewbar .thumb { margin: 0 auto; }

/* properties */
.type { display: flex; align-items: center; height: 37px; padding-right: 1px; border-top: 1px solid #b5b5b5; background: #fafafa; }
.pic { width: 34px; height: 34px; margin-right: 2px; display: grid; place-items: center; border: 1px solid #e0e0e0; }
.pic svg { width: 17px; height: 17px; }
.type .car { margin-left: auto; }
.type span { color: #444; }
.inst { display: flex; align-items: center; height: 12px; gap: 3px; padding-bottom: 1px; background: #f0f0f0; }
.pick { position: relative; display: flex; width: 93px; height: 10px; background: #e4e4e4; border: 1px solid #c3c3c3; }
.pick select { width: 100%; appearance: none; padding-left: 1px; line-height: 8px; }
.cv { position: absolute; right: 1px; top: 1px; width: 6px; height: 6px; pointer-events: none; }
.etype { display: flex; align-items: center; gap: 2px; white-space: nowrap; }
.etype svg { width: 8px; height: 8px; }
.plist { flex: 1; min-height: 0; overflow: hidden; }
table { width: 100%; border-collapse: collapse; table-layout: fixed; }
.c1 { width: 71px; }
.c3 { width: 7px; }
tr { height: 9px; }
th, td { height: 9px; padding: 0 0 0 1px; font-weight: 400; text-align: left; line-height: 8px; border-bottom: 1px solid #dcdcdc; white-space: nowrap; }
td { border-left: 1px solid #dcdcdc; }
th { padding-left: 3px; }
.g th, .g td { background: #dcdcdc; border-color: #dcdcdc; padding-left: 1px; }
.g td { padding: 0; }
.g svg { width: 6px; height: 6px; }
.dim { color: #909090; }
td.fld { padding: 0; }
td.fld > * { display: block; width: 100%; height: 8px; line-height: 6px; }
td.fld button { background: #e1e1e1; border: 1px solid #adadad; text-align: center; }
td.fld input { border: 1px solid #444; padding-left: 2px; }
input[type=checkbox] { display: block; appearance: none; width: 7px; height: 7px; border: 1px solid #777; background: #fff; }
input[type=checkbox]:disabled { border-color: #ccc; }
.foot { display: flex; align-items: center; justify-content: space-between; height: 13px; padding: 0 2px 0 1px; background: #f0f0f0; flex: none; }
.foot a { color: #1468c6; text-decoration: underline; }
.foot button { width: 35px; height: 10px; line-height: 8px; background: #cfcfcf; border: 1px solid #c3c3c3; color: #8a8a8a; }

/* status bar */
.status { display: flex; align-items: center; height: 12px; gap: 4px; padding: 0 32px 0 396px; background: linear-gradient(#e6e6e6, #c4c4c4); border-top: 1px solid #aaa; }
.status .pick { width: 102px; background: #fff; border-color: #ddd; color: #777; }
.zero { width: 9px; }
.gr { opacity: .6; }
.sels { display: flex; align-items: center; gap: 4px; margin-left: auto; }
.sels svg { width: 9px; height: 9px; }
```
FILE: model.js
```js
const NS = 'http://www.w3.org/2000/svg';
const frameLayer = document.getElementById('frame');
const pileLayer = document.getElementById('piles');

function rect(parent, x, y, w, h, fill, stroke) {
  const r = document.createElementNS(NS, 'rect');
  const a = { x, y, width: w, height: h, fill };
  if (stroke) { a.stroke = stroke; a['stroke-width'] = 0.9; }
  for (const k in a) r.setAttribute(k, a[k]);
  parent.appendChild(r);
}
const GRAY = '#c1c1c1', EDGE = '#4a4a4a';

// Columns as [x, width], then single dark edges.
const roofY = 190, baseY = 446;
[[347.5, 9], [382.5, 5], [406.5, 2], [418.5, 19], [463.5, 2], [488.5, 5], [518.5, 4], [524, 3.5],
 [550.5, 9], [580.5, 2.5], [608.5, 19], [637.5, 2], [658.5, 8], [690.5, 8.5]]
  .forEach(([x, w]) => rect(frameLayer, x, roofY, w, baseY - roofY, GRAY, EDGE));
[379, 380.8, 414, 415.3, 459.3, 484.3, 486.3, 522.5, 561.3, 586.5, 629.5, 631.3, 662, 667.3]
  .forEach(x => rect(frameLayer, x, roofY, 0.9, baseY - roofY, '#444'));
rect(frameLayer, 457.3, roofY, 1, baseY - roofY, '#000');

// Floor slabs
[189.5, 215.5, 241.5, 267.5, 293.5, 320.5, 346.5, 372.5, 399.5, 426.5].forEach(y => {
  [[347.5, 90], [456.5, 132], [591, 108]].forEach(([x, w]) => rect(frameLayer, x, y, w, 1.7, '#bbb', '#3d3d3d'));
});

// Lift shafts
rect(frameLayer, 437.5, 153.5, 20, 276, GRAY, EDGE);
rect(frameLayer, 588.5, 153.5, 19.5, 276, GRAY, EDGE);

// Basement and entrance blocks
rect(frameLayer, 347.5, 428.5, 351, 18, GRAY, EDGE);
[381, 383, 419, 421, 455, 457, 485, 488, 550, 560, 590, 627, 631, 658, 666]
  .forEach(x => rect(frameLayer, x, 428, 0.9, 18, '#555'));
[418.5, 421, 454, 457.5, 589.5, 592, 626, 629].forEach(x => rect(frameLayer, x, 412, 1, 24, '#666'));
rect(frameLayer, 413.5, 435.5, 219, 2.5, '#b5b5b5', EDGE);
rect(frameLayer, 435.5, 429.5, 23, 6, GRAY, EDGE);
rect(frameLayer, 422, 429.5, 12, 2, '#777', EDGE);
rect(frameLayer, 458.5, 426, 13, 3.5, '#6d6d6d', EDGE);
rect(frameLayer, 471.5, 424.5, 44, 11.5, GRAY, EDGE);
rect(frameLayer, 491.5, 438, 11, 3.5, GRAY, EDGE);
rect(frameLayer, 530.5, 424.5, 32, 3.5, GRAY, EDGE);
rect(frameLayer, 530.5, 430.5, 16, 5, GRAY, EDGE);
rect(frameLayer, 546.5, 429.5, 42, 6, GRAY, EDGE);
rect(frameLayer, 562, 426.5, 26, 1.5, '#777', EDGE);
rect(frameLayer, 574.5, 427.5, 13, 3, '#999', EDGE);
rect(frameLayer, 588.5, 429.5, 22, 6, GRAY, EDGE);
rect(frameLayer, 605, 426.5, 19, 3, '#999', EDGE);
rect(frameLayer, 612, 430.5, 12, 2, '#777', EDGE);
rect(frameLayer, 415.5, 404.5, 41, 7.5, GRAY, EDGE);
rect(frameLayer, 452.5, 396.5, 40.5, 8, GRAY, EDGE);
rect(frameLayer, 553.5, 396.5, 40, 8, GRAY, EDGE);
rect(frameLayer, 589.5, 404.5, 43, 7.5, GRAY, EDGE);

// Foundation slabs
rect(frameLayer, 341.5, 445.5, 135, 6, GRAY, EDGE);
rect(frameLayer, 612.5, 445.5, 92, 6, GRAY, EDGE);
rect(frameLayer, 469.5, 448.5, 149, 5.5, GRAY, EDGE);
[414.5, 426.5, 491.5, 554.5, 593.5, 620.5, 631.5, 699.5].forEach(x => rect(frameLayer, x, 446, 0.9, 6, '#555'));
rect(frameLayer, 340.5, 451, 129, 1.2, '#333');
rect(frameLayer, 618.5, 451, 87, 1.2, '#333');

// Piles: light bodies, shaded sides and black gaps, each as [x, width].
const addPiles = (list, fill) => list.forEach(([x, w]) => rect(pileLayer, x, 451, w, 68, fill));
addPiles([[341, 5], [349, 5], [357, 3], [362, 3], [366, 4], [374, 16], [392, 4], [397, 4], [402, 3], [410, 3],
  [414, 55], [472, 3], [477, 6], [483, 14], [504, 4], [518, 4], [525, 5], [538, 6], [548, 26], [576, 3],
  [582, 5], [589, 6], [597, 22], [621, 11], [633, 4], [641, 3], [645, 3], [651, 21], [677, 8], [686, 3],
  [692, 5], [700, 5]], '#c6baba');
addPiles([[343.5, 2], [351, 1.5], [357, 1], [362, 1], [374, 2], [382, 5], [389, 1], [393.5, 1], [397, 1], [404, 1],
  [415, 2], [418.5, 1], [421, 3], [426, 1], [429, 1], [432, 3], [436, 1], [439.5, 1], [443, 1], [446.5, 1],
  [449, 1], [452, 1.5], [456, 1], [459, 1], [462, 2], [466, 1], [474, 1], [478, 1.5], [482, 1], [493, 4],
  [518, 1], [520.5, 2], [527.5, 2], [538, 1], [548, 3], [552.5, 2], [556, 1], [559, 2], [565, 1], [567, 1],
  [571, 1], [576, 1], [583, 2], [589, 1], [593, 1.5], [598, 1], [600.5, 1], [603, 1.5], [606, 1], [609, 2],
  [613, 1], [616, 1], [623, 2], [627, 1.5], [630, 1], [641, 1], [645.5, 1], [652, 3], [661, 1.5], [668, 4],
  [687, 1], [694, 2], [703.5, 1]], '#6a6060');
addPiles([[424.5, 1.5], [433.5, 1.5], [441, 2], [586, 1.5], [622, 1], [679, 2], [682.5, 1.5]], '#8b8b86');
addPiles([[380, 1], [412, 1], [449.5, 1], [483.5, 1], [486.5, 1.7], [507, 1], [569.5, 1], [619, 1.2],
  [657, 1.2], [660.5, 1.2], [664.5, 1.2]], '#000');
```
